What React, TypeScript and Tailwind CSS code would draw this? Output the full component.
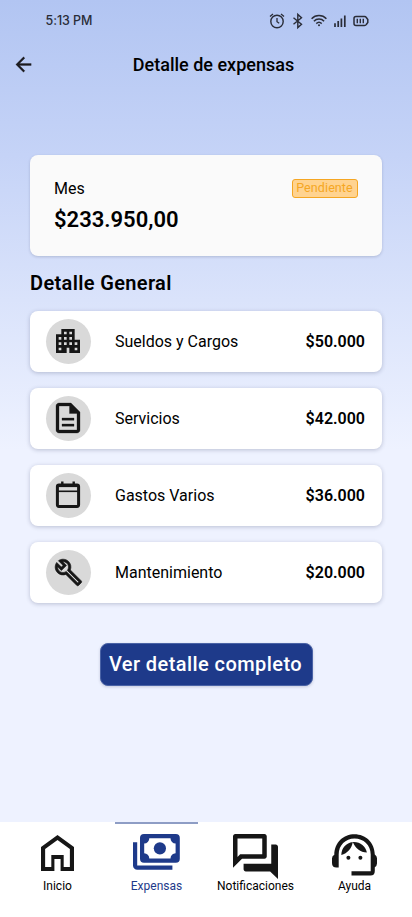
import type { ReactNode } from "react";

function ApartmentIcon() {
  return (
    <svg viewBox="0 0 24 24" className="mr-px mb-px size-8" fill="currentColor">
      <path d="M17 11V3H7v4H3v14h8v-4h2v4h8V11h-4zM7 19H5v-2h2v2zm0-4H5v-2h2v2zm0-4H5V9h2v2zm4 4H9v-2h2v2zm0-4H9V9h2v2zm0-4H9V5h2v2zm4 8h-2v-2h2v2zm0-4h-2V9h2v2zm0-4h-2V5h2v2zm4 12h-2v-2h2v2zm0-4h-2v-2h2v2z" />
    </svg>
  );
}

function DocumentIcon() {
  return (
    <svg viewBox="0 0 24 24" className="mr-px mb-px size-9" fill="currentColor" stroke="currentColor" strokeWidth="0.2">
      <path d="M8 16h8v1.500H8zm0-4h8v1.500H8zm6-10H6c-1.100 0-2 .9-2 2v16c0 1.100.890 2 1.990 2H18c1.100 0 2-.9 2-2V8l-6-6zm4 18H6V4h7v5h5v11z" />
    </svg>
  );
}

function CalendarIcon() {
  return (
    <svg viewBox="0 0 32 32" className="mr-px mb-px size-8" fill="none" stroke="currentColor">
      <rect x="5.400" y="6" width="21.200" height="21.400" rx="1.600" strokeWidth="3" />
      <path d="M5 6.600h22" strokeWidth="3" />
      <path d="M10.300 2.600v3M21.700 2.600v3" strokeWidth="2.400" />
      <path d="M5 12.300h22" strokeWidth="1.600" />
    </svg>
  );
}

function WrenchIcon() {
  return (
    <svg viewBox="0 0 24 24" className="mb-px size-[29px]" fill="currentColor" stroke="currentColor" strokeWidth="0.550" strokeLinejoin="round">
      <path d="M22.61 18.99l-9.08-9.08c.93-2.34.45-5.1-1.44-7C9.79.61 6.21.4 3.66 2.26L7.5 6.11 6.08 7.52 2.25 3.69C.39 6.23.6 9.82 2.9 12.11c1.86 1.86 4.57 2.35 6.89 1.48l9.11 9.11c.39.39 1.02.39 1.41 0l2.3-2.3c.4-.38.4-1.01 0-1.41zm-3 1.6l-9.46-9.46c-.61.45-1.29.72-2 .82-1.36.2-2.79-.21-3.83-1.25C3.37 9.76 2.93 8.5 3 7.26l3.09 3.09 4.24-4.24-3.09-3.09c1.24-.07 2.49.37 3.44 1.31 1.08 1.08 1.49 2.57 1.24 3.96-.12.71-.42 1.37-.88 1.96l9.45 9.45-.88.89z" />
    </svg>
  );
}

function HomeIcon() {
  return (
    <svg viewBox="4 3 16 18" className="mt-[0.5px] h-9 w-[33px]" preserveAspectRatio="none" fill="currentColor">
      <path d="M6 19h3v-6h6v6h3v-9l-6-4.500L6 10zm-2 2V9l8-6 8 6v12h-6.500v-6h-3v6z" />
    </svg>
  );
}

function CashIcon() {
  return (
    <svg viewBox="0 0 47 36" className="h-9 w-[47px]" fill="currentColor">
      <path d="M0 8.300h4.200v23.200h35.200v4.300H4.300A4.300 4.300 0 0 1 0 31.500z" />
      <path
        fillRule="evenodd"
        d="M11 0h31.800A4 4 0 0 1 46.800 4v20.700a4 4 0 0 1-4 4H11a4 4 0 0 1-4-4V4a4 4 0 0 1 4-4zM16.300 4.300a5.200 5.200 0 0 1-5.100 5.200v9.700a5.200 5.200 0 0 1 5.100 5.200h21.200a5.200 5.200 0 0 1 5.100-5.200V9.500a5.200 5.200 0 0 1-5.100-5.200z"
      />
      <circle cx="26.900" cy="14.350" r="6.100" />
    </svg>
  );
}

function ChatIcon() {
  return (
    <svg viewBox="2 2 20 20" className="size-[45px]" fill="currentColor">
      <path d="M15 4v7H5.170L4 12.170V4h11m1-2H3c-.55 0-1 .45-1 1v14l4-4h10c.55 0 1-.45 1-1V3c0-.55-.45-1-1-1zm5 4.700h-2v8.500H6.700v2.500c0 .55.45 1 1 1H18.500l3.500 3.300V7.700c0-.55-.45-1-1-1z" />
    </svg>
  );
}

function AgentIcon() {
  return (
    <svg viewBox="0 0 45 42" className="h-[42px] w-[45px]" fill="currentColor">
      <path d="M6.700 33.500H4.500Q0 33.500 0 29v-4.500q0-2.400 2.300-3.700C2.500 8.300 11.500.3 22.500.3S42.600 8.500 42.800 20.600Q45 22 45 24.300v5.200q0 2.300-2.200 3.700v3.800q0 4.500-4.300 4.500H19.500v-4.300h19.200V20.500C38.700 11.200 31.600 4.600 22.500 4.600S6.700 11.500 6.700 20.500z" />
      <circle cx="16.400" cy="23.800" r="2" />
      <circle cx="28.400" cy="23.800" r="2" />
      <path d="M20.800 8.100C14 9 9.500 14 9.300 21c6.300-1.500 10.500-6.700 11.500-12.900zM20.800 8.100c2.500 6.400 7.500 10.300 14.100 10.500C33.600 12 28 7.600 20.800 8.100z" />
    </svg>
  );
}

function StatusIcons() {
  return (
    <svg viewBox="268 12 102 18" className="h-[18px] w-[102px] text-[#2a2d38]" fill="none" stroke="currentColor">
      <circle cx="277" cy="21.500" r="6.200" strokeWidth="1.400" />
      <path d="M277 18v3.700l2.200 1.500M270 16.500l3-2.600M284 16.500l-3-2.600" strokeWidth="1.300" />
      <path d="M293.500 17.700l8 6.600-3.700 3.300V14.400l3.700 3.300-8 6.600" strokeWidth="1.400" />
      <path d="M311.600 18.700a10.200 10.200 0 0 1 14.800 0M313.900 21.300a7 7 0 0 1 10.200 0M316.300 23.600a3.900 3.900 0 0 1 5.400 0" strokeWidth="1.500" />
      <circle cx="319" cy="25.300" r="1" fill="currentColor" stroke="none" />
      <path d="M335 23.200V27M338.200 21v6M341.400 18.500V27M344.800 15.500V27" strokeWidth="1.700" />
      <path d="M356 16.500h8.500q1.300 0 1.800 1l1.500 2v3l-1.500 2q-.5 1-1.800 1H356q-2 0-2-2v-5q0-2 2-2z" strokeWidth="1.500" />
      <path d="M357.300 18.800v4.400M360.300 18.800v4.400M363.300 18.800v4.400" strokeWidth="1.400" />
    </svg>
  );
}

const expenses: { label: string; amount: string; icon: ReactNode }[] = [
  { label: "Sueldos y Cargos", amount: "$50.000", icon: <ApartmentIcon /> },
  { label: "Servicios", amount: "$42.000", icon: <DocumentIcon /> },
  { label: "Gastos Varios", amount: "$36.000", icon: <CalendarIcon /> },
  { label: "Mantenimiento", amount: "$20.000", icon: <WrenchIcon /> },
];

const tabs: { label: string; icon: ReactNode; active?: boolean }[] = [
  { label: "Inicio", icon: <HomeIcon /> },
  { label: "Expensas", icon: <CashIcon />, active: true },
  { label: "Notificaciones", icon: <ChatIcon /> },
  { label: "Ayuda", icon: <AgentIcon /> },
];

export default function App() {
  return (
    <div className="flex h-[917px] w-[412px] flex-col overflow-hidden bg-[linear-gradient(180deg,#b2c5f2_0px,#c5d3f7_155px,#dae3fb_300px,#eef2ff_450px)] font-[Roboto,sans-serif] text-black">
      <div className="flex h-[42px] items-center justify-between pr-[42px] pl-[45.5px]">
        <span className="pt-px font-[Inter,sans-serif] text-[12.5px] font-medium tracking-[-0.05px] text-[#2a2d38]">5:13 PM</span>
        <StatusIcons />
      </div>

      <header className="grid h-[46px] grid-cols-[50px_1fr_35px] items-center">
        <svg viewBox="0 0 24 24" className="mb-px ml-3 size-[23px] text-[#1c1b1f]" fill="currentColor" stroke="currentColor" strokeWidth="0.300">
          <path d="M20 11H7.830l5.590-5.590L12 4l-8 8 8 8 1.410-1.410L7.830 13H20v-2z" />
        </svg>
        <h1 className="text-center text-lg font-medium">Detalle de expensas</h1>
      </header>

      <main className="flex flex-1 flex-col px-[30px] pt-[67px]">
        <section className="flex h-[101px] items-start justify-between rounded-lg bg-[#fafafa] px-6 pt-[22px] shadow-[0_1px_3px_rgba(30,40,80,0.2)]">
          <div>
            <p className="text-base leading-6">Mes</p>
            <p className="mt-[5px] text-[22px] leading-7 font-semibold">$233.950,00</p>
          </div>
          <span className="mt-[2px] flex h-[19px] w-[66px] items-center justify-center rounded-[3px] border border-[#f5a623] bg-[#ffd390] pr-px text-[12.5px] tracking-[0.1px] text-[#f5a623]">
            Pendiente
          </span>
        </section>

        <h2 className="mt-[13px] text-xl leading-7 font-semibold tracking-[0.35px]">Detalle General</h2>

        <ul className="mt-[14px] flex flex-col gap-4">
          {expenses.map((e) => (
            <li key={e.label} className="flex h-[61px] items-center rounded-lg bg-white pr-[17px] pl-4 shadow-[0_1px_4px_rgba(30,40,80,0.25)]">
              <span className="flex size-[45px] items-center justify-center rounded-full bg-[#d9d9d9] text-[#161616]">{e.icon}</span>
              <span className="ml-6 flex-1 text-base">{e.label}</span>
              <span className="text-base font-semibold">{e.amount}</span>
            </li>
          ))}
        </ul>

        <button className="mt-10 h-[43px] w-[213px] self-center rounded-lg border border-[#4a63a6] bg-[#1e3a8a] pr-px pb-[2px] text-xl font-medium tracking-[0.43px] whitespace-nowrap text-white shadow-[0_1px_3px_rgba(30,40,80,0.2)]">
          Ver detalle completo
        </button>
      </main>

      <nav className="flex h-[95px] bg-white pl-2">
        {tabs.map((t) => (
          <div key={t.label} className={t.active ? "flex w-[99px] flex-col items-center text-[#1e3a8a]" : "flex w-[99px] flex-col items-center text-black"}>
            <div className={t.active ? "h-[2px] w-[83px] bg-[#8e9dc5]" : "h-[2px] w-[83px]"} />
            <div className={t.active ? "mt-[10px] h-11" : "mt-[10px] h-11 text-[#161616]"}>{t.icon}</div>
            <span className="text-xs leading-4">{t.label}</span>
          </div>
        ))}
      </nav>
    </div>
  );
}
